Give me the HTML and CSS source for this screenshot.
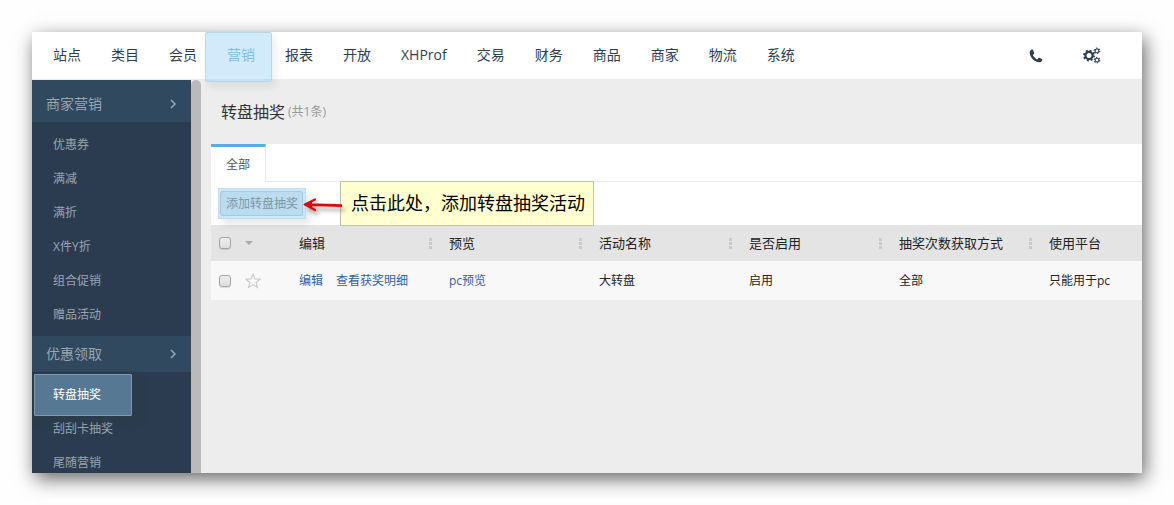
FILE: index.html
```html
<!DOCTYPE html>
<html lang="zh-CN">
<head>
<meta charset="utf-8">
<title>转盘抽奖</title>
<link rel="stylesheet" href="styles.css">
</head>
<body>
<div class="window">
  <header class="topbar">
    <nav class="menu">
      <a href="#">站点</a>
      <a href="#">类目</a>
      <a href="#">会员</a>
      <a href="#" class="current">营销</a>
      <a href="#">报表</a>
      <a href="#">开放</a>
      <a href="#">XHProf</a>
      <a href="#">交易</a>
      <a href="#">财务</a>
      <a href="#">商品</a>
      <a href="#">商家</a>
      <a href="#">物流</a>
      <a href="#">系统</a>
    </nav>
    <div class="tools">
      <button type="button" aria-label="电话">
        <svg width="14" height="14" viewBox="0 0 14 14"><path fill="#2e3e4e" d="M3 .6C1.400 1 .6 2.300 .7 3.900 1 8.200 5.500 12.900 10 13.300c1.700.1 3-.7 3.300-2.300.1-.5 0-.7-.4-.9L10.500 8.800c-.5-.2-.7-.1-1 .3l-.9 1c-.2.300-.4.300-.7.100C6.300 9.300 4.900 7.900 4 6.300c-.2-.3-.1-.5.200-.7l.8-.8c.4-.3.4-.5.200-1L4 1.100C3.800.6 3.500.5 3 .6z"/></svg>
      </button>
      <button type="button" aria-label="设置">
        <svg width="18" height="17" viewBox="0 0 18 17">
          <g fill="none" stroke="#2e3e4e">
            <circle cx="6" cy="8.500" r="3.600" stroke-width="2.200"/>
            <circle cx="6" cy="8.500" r="5" stroke-width="1.800" stroke-dasharray="2 1.927"/>
            <circle cx="14" cy="3.900" r="1.900" stroke-width="1.100"/>
            <circle cx="14" cy="3.900" r="2.800" stroke-width="1.100" stroke-dasharray="1.500 1.432"/>
            <circle cx="14" cy="13.100" r="1.900" stroke-width="1.100"/>
            <circle cx="14" cy="13.100" r="2.800" stroke-width="1.100" stroke-dasharray="1.500 1.432"/>
          </g>
        </svg>
      </button>
    </div>
  </header>
  <div class="body">
    <aside class="sidebar">
      <section>
        <h2>商家营销 <svg width="6" height="10" viewBox="0 0 6 10"><path d="M1 1l4 4-4 4" fill="none" stroke="#9aa9b3" stroke-width="1.500"/></svg></h2>
        <ul>
          <li><a href="#">优惠券</a></li>
          <li><a href="#">满减</a></li>
          <li><a href="#">满折</a></li>
          <li><a href="#">X件Y折</a></li>
          <li><a href="#">组合促销</a></li>
          <li><a href="#">赠品活动</a></li>
        </ul>
      </section>
      <section>
        <h2>优惠领取 <svg width="6" height="10" viewBox="0 0 6 10"><path d="M1 1l4 4-4 4" fill="none" stroke="#9aa9b3" stroke-width="1.500"/></svg></h2>
        <ul>
          <li><a href="#" class="active"><span>转盘抽奖</span></a></li>
          <li><a href="#">刮刮卡抽奖</a></li>
          <li><a href="#">尾随营销</a></li>
        </ul>
      </section>
    </aside>
    <div class="scroll"></div>
    <main class="content">
      <h1>转盘抽奖<small>(共1条)</small></h1>
      <div class="tabs"><button type="button" class="tab">全部</button></div>
      <div class="actions">
        <button type="button" class="add">添加转盘抽奖</button>
        <div class="callout">点击此处，添加转盘抽奖活动
          <svg class="arrow" width="44" height="20" viewBox="0 0 44 20"><path d="M4 9.500L14 4.500M4 9.500L14 15" fill="none" stroke="#dc0a0a" stroke-width="2.200" stroke-linecap="round"/><path d="M2 9.500l9-3v6zM8 8.200L41 9.300v2.800L8 11z" fill="#dc0a0a"/></svg>
        </div>
      </div>
      <table>
        <colgroup><col class="pick"><col class="field"><col class="field"><col class="field"><col class="field"><col class="field"><col></colgroup>
        <thead>
          <tr>
            <th><div class="marks"><input type="checkbox" aria-label="全选"><svg width="8" height="4" viewBox="0 0 8 4"><path d="M0 0h8L4 4z" fill="#aaa"/></svg></div></th>
            <th class="sizable">编辑</th>
            <th class="sizable">预览</th>
            <th class="sizable">活动名称</th>
            <th class="sizable">是否启用</th>
            <th class="sizable">抽奖次数获取方式</th>
            <th>使用平台</th>
          </tr>
        </thead>
        <tbody>
          <tr>
            <td><div class="marks"><input type="checkbox" aria-label="选择大转盘"><svg width="16" height="16" viewBox="0 0 16 16"><path d="M8 1.200l1.900 4.700 5.100.3-3.900 3.300 1.300 5L8 11.700l-4.400 2.800 1.300-5L1 6.200l5.100-.3z" fill="#fbfbfb" stroke="#ccc" stroke-width="1.200"/></svg></div></td>
            <td><div class="links"><a href="#">编辑</a><a href="#">查看获奖明细</a></div></td>
            <td><a href="#">pc预览</a></td>
            <td>大转盘</td>
            <td>启用</td>
            <td>全部</td>
            <td>只能用于pc</td>
          </tr>
        </tbody>
      </table>
    </main>
  </div>
</div>
</body>
</html>
```

FILE: styles.css
```css
* { box-sizing: border-box; }

body {
  margin: 0;
  height: 100vh;
  padding: 32px;
  overflow: hidden;
  background: #fefefe;
  color: #222;
  font: 12px/20px "Open Sans", "Noto Sans CJK SC", sans-serif;
}

a { text-decoration: none; color: inherit; }
button { font: inherit; color: inherit; border: 0; background: none; padding: 0; }
svg { display: block; }

.window {
  height: 100%;
  display: flex;
  flex-direction: column;
  background: #ededed;
  box-shadow: 3px 6px 18px rgba(0, 0, 0, .6);
}

.topbar {
  display: flex;
  justify-content: space-between;
  height: 47px;
  flex: none;
  background: #fff;
  color: #2e3e4e;
}
.menu { display: flex; padding-left: 6px; font-size: 14px; line-height: 46px; }
.menu a { padding: 0 15px; white-space: nowrap; }
.menu .current { position: relative; color: #77bdec; }
.menu .current::before {
  content: "";
  position: absolute;
  z-index: 1;
  inset: 0 -2px -3px -7px;
  background: rgba(130, 196, 238, .36);
  border: 1px solid #b5d8ee;
  border-radius: 2px;
  box-shadow: 3px 5px 8px rgba(0, 0, 0, .08);
}
.tools { display: flex; align-items: center; gap: 40px; padding-right: 41px; }

.body { flex: 1; min-height: 0; display: flex; }

.sidebar {
  width: 159px;
  flex: none;
  margin-top: 1px;
  padding-top: 6px;
  overflow: hidden;
  background: #31495f;
  color: #98a5ae;
}
.sidebar h2 {
  display: flex;
  align-items: center;
  justify-content: space-between;
  margin: 0;
  padding: 0 15px 0 14px;
  font-size: 14px;
  line-height: 36px;
  font-weight: 400;
  background: #31495f;
}
.sidebar ul { margin: 0; padding: 6px 0 4px; list-style: none; background: #2c3c50; }
.sidebar li a { display: block; padding-left: 21px; line-height: 34px; }
.sidebar .active { position: relative; color: #fff; }
.sidebar .active span { position: relative; }
.sidebar .active::before {
  content: "";
  position: absolute;
  inset: -4px 59px -4px 2px;
  background: #567892;
  border: 1px solid #8198aa;
  border-radius: 1px;
  box-shadow: 4px 4px 8px rgba(40, 60, 70, .6);
}
.scroll { width: 10px; flex: none; margin-top: 1px; background: #bababa; border-radius: 5px 5px 0 0; }

.content { flex: 1; min-width: 0; padding-left: 10px; }
h1 {
  display: flex;
  align-items: center;
  gap: 3px;
  margin: 0;
  padding: 0 10px;
  height: 65px;
  font-size: 16px;
  font-weight: 400;
  color: #333;
}
h1 small { font-size: 12px; color: #999; }

.tabs { display: flex; height: 38px; background: #fff; }
.tabs::after { content: ""; flex: 1; border-bottom: 1px solid #eaeaea; }
.tab {
  padding: 0 15px;
  border-top: 3px solid #5dade2;
  border-right: 1px solid #eaeaea;
  color: #555;
}

.actions { position: relative; height: 43px; padding: 6px 7px; background: #fff; }
.add {
  padding: 0 7px;
  height: 31px;
  color: #7d95a5;
  background: #bbdcef;
  border: 1px solid #bcdff3;
  border-width: 1px;
  box-shadow: inset 0 0 0 2px #cce7f8, 0 0 0 0 #cce7f8, 4px 5px 8px rgba(0, 0, 0, .1);
  position: relative;
}
.add::before {
  content: "";
  position: absolute;
  inset: 2px 2px 2px 1px;
  border: 1px solid #a5c9de;
  border-radius: 3px;
}
.callout {
  position: absolute;
  left: 129px;
  top: -1px;
  padding: 0 8px 0 10px;
  border: 1px solid #c3c3aa;
  background: #ffffcf;
  color: #000;
  font-size: 18px;
  font-weight: 400;
  line-height: 43px;
  white-space: nowrap;
}
.arrow { position: absolute; left: -40px; top: 13px; filter: drop-shadow(3px 4px 2px rgba(0, 0, 0, .35)); }

table { width: 100%; table-layout: fixed; border-collapse: collapse; }
.pick { width: 78px; }
.field { width: 150px; }
th, td { padding: 0 10px; text-align: left; white-space: nowrap; }
th { height: 36px; font-size: 13px; font-weight: 400; background-color: #e4e4e4; }
td { height: 39px; background: #f8f8f8; }
td a { color: #2f62a8; }
.sizable {
  background-image: repeating-linear-gradient(#cbcbcb 0 3px, transparent 3px 4px);
  background-size: 3px 11px;
  background-position: right 7px center;
  background-repeat: no-repeat;
}
.links { display: flex; gap: 13px; }
.marks { display: flex; align-items: center; gap: 14px; }
input {
  appearance: none;
  width: 12px;
  height: 12px;
  margin: 0 0 0 -2px;
  border: 1px solid #a4a4a4;
  border-radius: 3px;
  background: linear-gradient(#eee, #ddd);
  box-shadow: 0 1px 1px rgba(0, 0, 0, .12);
}
```
